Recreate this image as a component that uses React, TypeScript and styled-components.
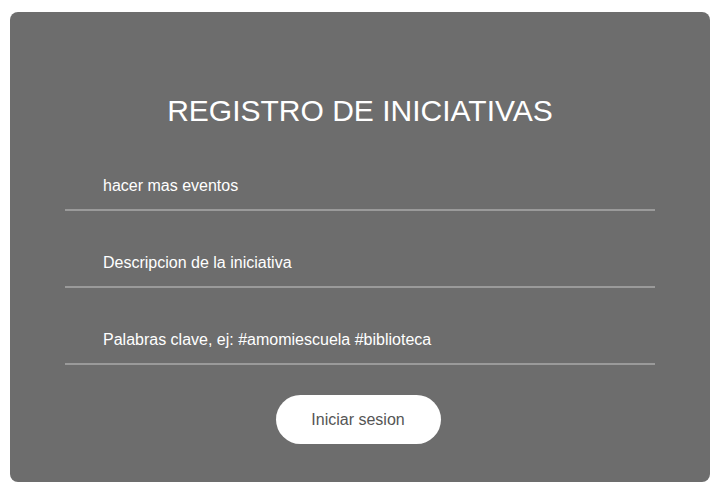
import styled, { createGlobalStyle } from "styled-components";

const GlobalStyle = createGlobalStyle`
  body {
    margin: 0;
    background: #fff;
    font-family: "Liberation Sans", Arial, sans-serif;
  }
  input::placeholder {
    color: #fff;
    opacity: 1;
  }
`;

const Page = styled.div`
  width: 726px;
  height: 494px;
  padding: 12px 16px 12px 10px;
  box-sizing: border-box;
`;

const Card = styled.form`
  width: 700px;
  height: 470px;
  box-sizing: border-box;
  background-color: #6d6d6d;
  border-radius: 8px;
  padding-top: 82px;
  display: flex;
  flex-direction: column;
  align-items: center;
`;

const Title = styled.h1`
  margin: 0 0 34px;
  font-size: 30px;
  font-weight: normal;
  line-height: 34px;
  color: #fff;
`;

const Fields = styled.div`
  display: flex;
  flex-direction: column;
  gap: 28px;
  width: 590px;
`;

const Field = styled.input`
  box-sizing: border-box;
  width: 100%;
  height: 49px;
  padding: 0 0 0 38px;
  border: none;
  border-bottom: 2px solid #9a9a9a;
  background: transparent;
  color: #fff;
  font-family: inherit;
  font-size: 16px;
  outline: none;
`;

const SubmitButton = styled.button`
  margin: 30px 4px 0 0;
  width: 165px;
  height: 49px;
  border: none;
  border-radius: 25px;
  background: #fff;
  color: #555;
  font-family: inherit;
  font-size: 16px;
  cursor: pointer;
`;

export default function App() {
  return (
    <>
      <GlobalStyle />
      <Page>
        <Card onSubmit={(e) => e.preventDefault()}>
          <Title>REGISTRO DE INICIATIVAS</Title>
          <Fields>
            <Field defaultValue="hacer mas eventos" />
            <Field placeholder="Descripcion de la iniciativa" />
            <Field placeholder="Palabras clave, ej: #amomiescuela #biblioteca" />
          </Fields>
          <SubmitButton type="submit">Iniciar sesion</SubmitButton>
        </Card>
      </Page>
    </>
  );
}
